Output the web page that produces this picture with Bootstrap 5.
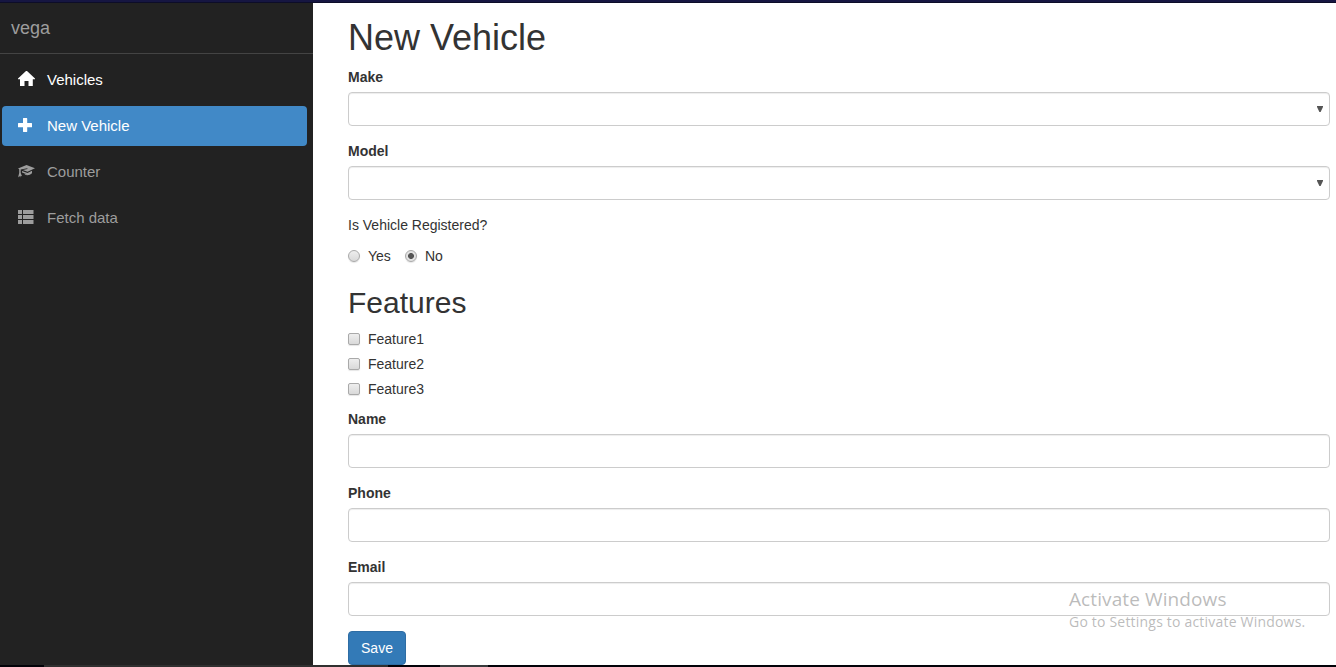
<!DOCTYPE html>
<html lang="en">
<head>
<meta charset="utf-8">
<meta name="viewport" content="width=device-width, initial-scale=1">
<title>vega</title>
<link href="https://cdn.jsdelivr.net/npm/bootstrap@5.3.0/dist/css/bootstrap.min.css" rel="stylesheet">
<style>
body{font-family:"Liberation Sans",Arial,sans-serif;font-size:14px;line-height:20px;color:#333;height:100vh;overflow:hidden}
.top-strip{height:3px;background:linear-gradient(#161642 0 66%,#0d0d28 66%)}
.task-strip{height:2px;background:#020208}
.task-strip .gap-a{width:44px}
.task-strip .seg-a{width:344px;background:#303030}
.task-strip .seg-b{width:48px;margin-left:52px;background:#383a3c}
.side{width:313px;background:#222}
.side .navbar-brand{height:51px;padding:15px 11px;font-size:18px;line-height:20px;color:#9d9d9d;border-bottom:1px solid #444}
.side .nav{padding:6px 6px 0 2px;gap:6px}
.side .nav-link{height:40px;padding:10px 15px;font-size:15px;line-height:20px;color:#9d9d9d;border-radius:4px}
.side .nav-link svg{width:18px;height:16px;margin:0 12px 2px 0}
.side .nav-link.lit{color:#fff}
.side .nav-link.active{color:#fff;background:#4189c7}
.content-pane{padding:15px 6px 0 35px}
h1{font-size:36px;line-height:40px;font-weight:400;margin:0 0 9px}
h2{font-size:30px;line-height:33px;font-weight:400;margin:20px 0 10px}
.form-label{display:block;font-weight:700;margin:0 0 5px;line-height:20px}
.field{margin-bottom:15px}
.form-control,.form-select{height:34px;border:1px solid #ccc;border-radius:4px;font-size:14px;padding:6px 12px;box-shadow:inset 0 1px 1px rgba(0,0,0,.075)}
.form-select{background-image:url("data:image/svg+xml,%3Csvg xmlns='http://www.w3.org/2000/svg' viewBox='0 0 6 6'%3E%3Cpath d='M0 0h6v1L3.600 6H2.400L0 1z' fill='%23555'/%3E%3C/svg%3E");background-size:6px 6px;background-position:right 6px top 13px}
.choice{height:20px;line-height:20px}
.choice input{appearance:none;width:12px;height:12px;margin:0 8px 1px 0;border:1px solid #a9a9a9;border-radius:2px;background:linear-gradient(#eee,#d9d9d9);box-shadow:0 1px 1px rgba(0,0,0,.1)}
.choice input[type=radio]{border-radius:50%}
.choice input[type=radio]:checked{background:radial-gradient(circle,#555 0 2.6px,#e2e2e2 3.3px)}
.btn-primary{--bs-btn-bg:#337ab7;--bs-btn-border-color:#2e6da4;height:34px;width:58px;font-size:14px;line-height:20px;padding:6px 12px;border-radius:4px}
.activation{left:1069px;top:587px;color:rgba(120,120,120,.5);font-family:"Open Sans","Noto Sans",sans-serif;white-space:nowrap;pointer-events:none}
.activation .big{font-size:19px;line-height:24px;letter-spacing:.1px}
.activation .sub{font-size:14px;line-height:20px;letter-spacing:.2px;margin-top:1px}
</style>
</head>
<body class="d-flex flex-column">
<div class="top-strip flex-shrink-0"></div>
<div class="d-flex flex-grow-1 overflow-hidden">
  <aside class="side flex-shrink-0">
    <a class="navbar-brand d-block m-0" href="#">vega</a>
    <nav class="nav flex-column">
      <a class="nav-link lit d-flex align-items-center" href="#"><svg viewBox="0 0 18 16" fill="currentColor"><path d="M9 0h1l8 7.600v.6h-2.200V15H11.500v-5h-4v5H3V8.200H1v-.6z"/></svg>Vehicles</a>
      <a class="nav-link active d-flex align-items-center" href="#"><svg viewBox="0 0 18 16" fill="currentColor"><path d="M6.400 1h3.400q.4 0 .4.400V6h4.400q.4 0 .4.400v3.500q0 .4-.4.400h-4.400v4.300q0 .4-.4.400H6.400q-.4 0-.4-.4v-4.300H1.400q-.4 0-.4-.4V6.400Q1 6 1.400 6H6V1.400q0-.4.4-.4z"/></svg>New Vehicle</a>
      <a class="nav-link d-flex align-items-center" href="#"><svg viewBox="0 0 18 16" fill="currentColor"><path d="M9.500 2 18 5.200 10.500 8.700 5.800 7 10.500 6 10.300 5.200 3.700 6.500V10l1.300 3.200-1.400-.5L3.200 14.500 2.400 13 1 14.500 2.200 10V6.300L1 5.500z"/><path d="m5 8 5.500 2L15 7.700v2.500q-2 2.100-4.500 2.100-2 0-3.300-1.500l3.200.7-5.400-2z"/></svg>Counter</a>
      <a class="nav-link d-flex align-items-center" href="#"><svg viewBox="0 0 18 16" fill="currentColor"><path d="M1 1h4v4H1zM6 1h10.500v4H6zM1 6h4v4H1zM6 6h10.500v4H6zM1 11h4v4H1zM6 11h10.500v4H6z"/></svg>Fetch data</a>
    </nav>
  </aside>
  <main class="content-pane flex-grow-1">
    <h1>New Vehicle</h1>
    <form>
      <div class="field"><label class="form-label" for="make">Make</label><select class="form-select" id="make"><option></option></select></div>
      <div class="field"><label class="form-label" for="model">Model</label><select class="form-select" id="model"><option></option></select></div>
      <p class="choice mb-0">Is Vehicle Registered?</p>
      <div class="d-flex" style="margin-top:11px">
        <label class="choice d-flex align-items-center" style="width:57px"><input type="radio" name="reg">Yes</label>
        <label class="choice d-flex align-items-center"><input type="radio" name="reg" checked>No</label>
      </div>
      <h2>Features</h2>
      <div class="d-flex flex-column" style="gap:5px;margin-bottom:10px">
        <label class="choice d-flex align-items-center"><input type="checkbox">Feature1</label>
        <label class="choice d-flex align-items-center"><input type="checkbox">Feature2</label>
        <label class="choice d-flex align-items-center"><input type="checkbox">Feature3</label>
      </div>
      <div class="field"><label class="form-label" for="name">Name</label><input class="form-control" id="name"></div>
      <div class="field"><label class="form-label" for="phone">Phone</label><input class="form-control" id="phone"></div>
      <div class="field"><label class="form-label" for="email">Email</label><input class="form-control" id="email"></div>
      <button type="button" class="btn btn-primary d-block">Save</button>
    </form>
  </main>
</div>
<div class="task-strip d-flex flex-shrink-0"><div class="gap-a"></div><div class="seg-a"></div><div class="seg-b"></div></div>
<div class="activation position-absolute"><div class="big">Activate Windows</div><div class="sub">Go to Settings to activate Windows.</div></div>
<script src="https://cdn.jsdelivr.net/npm/bootstrap@5.3.0/dist/js/bootstrap.bundle.min.js"></script>
</body>
</html>
